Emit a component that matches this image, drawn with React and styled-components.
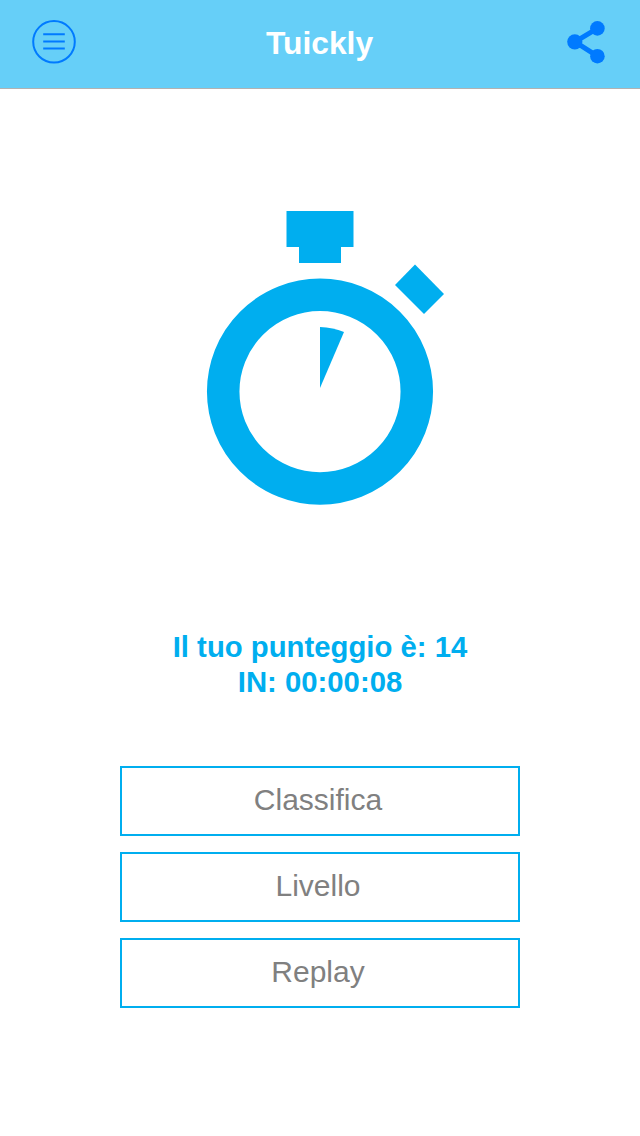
import React from "react";
import styled, { createGlobalStyle } from "styled-components";

const Global = createGlobalStyle`
  html, body { margin: 0; padding: 0; background: #fff; }
  body { font-family: "Liberation Sans", Arial, sans-serif; }
`;
const Page = styled.div`
  width: 640px; height: 1136px; display: flex; flex-direction: column; align-items: center; overflow: hidden;
`;
const Header = styled.header`
  width: 100%; height: 89px; box-sizing: border-box; background: #66cff8; border-bottom: 1px solid #b2b2b2;
  display: grid; grid-template-columns: 1fr auto 1fr; padding: 0 33px 0 32px;
`;
const Title = styled.h1`
  margin: 0; font-size: 31.8px; font-weight: 700; color: #fff; line-height: 87px;
`;
const IconSlot = styled.div`
  height: 44px; margin-top: 20px; display: flex; justify-content: ${p => p.$end ? "flex-end" : "flex-start"};
  svg { display: block; }
`;
const Watch = styled.svg`
  display: block; margin-top: 122px; flex: none;
`;
const Score = styled.div`
  margin-top: 124px; text-align: center; color: #00aeef; font-size: 29.3px; font-weight: 700; line-height: 35px;
`;
const Actions = styled.div`
  margin-top: 67px; width: 400px; display: flex; flex-direction: column; gap: 16px;
`;
const ActionButton = styled.button`
  width: 400px; height: 70px; box-sizing: border-box; border: 2px solid #00aeef; background: #fff; color: #808080;
  font-family: "Liberation Sans", Arial, sans-serif; font-size: 30px; padding: 0 4px 2px 0; margin: 0; border-radius: 0;
`;

const blue = "#007aff";
const MenuIcon = () => (
  <svg width="44" height="44" viewBox="32 20 44 44" fill="none" stroke={blue} strokeWidth="2">
    <circle cx="54" cy="41.8" r="20.8" />
    <path d="M43.2 34.2H64.8M43.2 41.4H64.8M43.2 48.6H64.8" />
  </svg>
);
const ShareIcon = () => (
  <svg width="40" height="44" viewBox="567 20 40 44" fill={blue}>
    <path d="M597.4 28.4L575 41.8L597.4 56.2" fill="none" stroke={blue} strokeWidth="5" />
    <circle cx="597.4" cy="28.4" r="7.3" />
    <circle cx="574.8" cy="41.8" r="7.6" />
    <circle cx="597.4" cy="56.2" r="7.3" />
  </svg>
);

export default function App() {
  return (
    <Page>
      <Global />
      <Header>
        <IconSlot><MenuIcon /></IconSlot>
        <Title>Tuickly</Title>
        <IconSlot $end><ShareIcon /></IconSlot>
      </Header>
      <Watch width="250" height="294" viewBox="195 211 250 294" fill="#00aeef">
        <path d="M286.5 211H353.5V247H341V263H299V247H286.5Z" />
        <path d="M415 264.5L444 294L424 314L395 285Z" />
        <circle cx="320" cy="391.6" r="96.8" fill="none" stroke="#00aeef" strokeWidth="32.5" />
        <path d="M320 388V327Q333 327.6 344 332Z" />
      </Watch>
      <Score>Il tuo punteggio è: 14<br />IN: 00:00:08</Score>
      <Actions>
        <ActionButton>Classifica</ActionButton>
        <ActionButton>Livello</ActionButton>
        <ActionButton>Replay</ActionButton>
      </Actions>
    </Page>
  );
}
